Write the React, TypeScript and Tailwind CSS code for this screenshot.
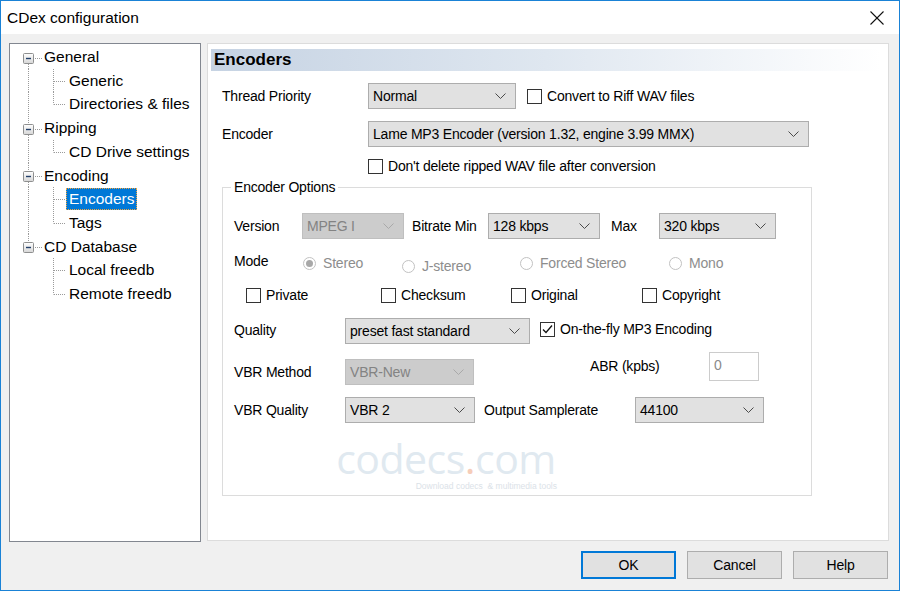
import React from 'react';

const F = "font-['Liberation_Sans',Arial,sans-serif]";

type Node = { label: string; root: boolean; first?: boolean; lastRoot?: boolean; lastChild?: boolean; rootGoesOn?: boolean; selected?: boolean };

const tree: Node[] = [
  { label: 'General', root: true, first: true },
  { label: 'Generic', root: false, rootGoesOn: true },
  { label: 'Directories & files', root: false, rootGoesOn: true, lastChild: true },
  { label: 'Ripping', root: true },
  { label: 'CD Drive settings', root: false, rootGoesOn: true, lastChild: true },
  { label: 'Encoding', root: true },
  { label: 'Encoders', root: false, rootGoesOn: true, selected: true },
  { label: 'Tags', root: false, rootGoesOn: true, lastChild: true },
  { label: 'CD Database', root: true, lastRoot: true },
  { label: 'Local freedb', root: false },
  { label: 'Remote freedb', root: false, lastChild: true },
];

const dot = { stroke: '#9a9a9a', strokeWidth: 1, strokeDasharray: '1 1', fill: 'none' };

function Connector({ n }: { n: Node }) {
  if (n.root) {
    return (
      <svg width="32" height="24" viewBox="0 0 32 24" className="shrink-0 overflow-visible">
        <defs>
          <linearGradient id="bx" x1="0" y1="0" x2="0" y2="1">
            <stop offset="0" stopColor="#ffffff" />
            <stop offset="1" stopColor="#d6d6d6" />
          </linearGradient>
        </defs>
        {!n.first && <line x1="18.5" y1="0" x2="18.5" y2="8" {...dot} />}
        {!n.lastRoot && <line x1="18.5" y1="19" x2="18.5" y2="24" {...dot} />}
        <line x1="25" y1="13.5" x2="32" y2="13.5" {...dot} />
        <rect x="13.5" y="8.5" width="10" height="10" rx="1" fill="url(#bx)" stroke="#8e8f8f" />
        <line x1="16" y1="13.5" x2="21" y2="13.5" stroke="#23406a" strokeWidth="1.4" />
      </svg>
    );
  }
  return (
    <svg width="56" height="24" viewBox="0 0 56 24" className="shrink-0 overflow-visible">
      {n.rootGoesOn && <line x1="18.5" y1="0" x2="18.5" y2="24" {...dot} />}
      <line x1="43.5" y1="0" x2="43.5" y2={n.lastChild ? 12.5 : 24} {...dot} />
      <line x1="44" y1="12.5" x2="56" y2="12.5" {...dot} />
    </svg>
  );
}

function Chevron({ disabled }: { disabled?: boolean }) {
  return (
    <svg width="11" height="6" viewBox="0 0 11 6" className="shrink-0">
      <polyline points="0.5,0.5 5.5,5.5 10.5,0.5" fill="none" stroke={disabled ? '#a9a9a9' : '#4a4a4a'} strokeWidth="1" />
    </svg>
  );
}

function Select({ value, className, disabled }: { value: string; className: string; disabled?: boolean }) {
  return (
    <div
      className={`h-[26px] shrink-0 flex items-center justify-between pl-[4px] pr-[9px] border ${
        disabled ? 'bg-[#cccccc] border-[#bfbfbf] text-[#838383]' : 'bg-[#e1e1e1] border-[#adadad] text-black'
      } ${className}`}
    >
      <span className="whitespace-nowrap">{value}</span>
      <Chevron disabled={disabled} />
    </div>
  );
}

function Check({ checked }: { checked?: boolean }) {
  return (
    <div className="w-[15px] h-[15px] shrink-0 border border-[#333333] bg-white flex items-center justify-center">
      {checked && (
        <svg width="13" height="13" viewBox="0 0 13 13">
          <polyline points="2,6.5 5,9.5 11,2.5" fill="none" stroke="#111" strokeWidth="1.3" />
        </svg>
      )}
    </div>
  );
}

function CheckLabel({ label, checked }: { label: string; checked?: boolean }) {
  return (
    <div className="flex items-center gap-[5px] whitespace-nowrap">
      <Check checked={checked} />
      <span>{label}</span>
    </div>
  );
}

function Radio({ label, checked, className }: { label: string; checked?: boolean; className: string }) {
  return (
    <div className={`flex items-center gap-[7px] text-[#8d8d8d] whitespace-nowrap ${className}`}>
      <div className="w-[13px] h-[13px] rounded-full border border-[#c2c2c2] bg-white flex items-center justify-center shrink-0">
        {checked && <div className="w-[7px] h-[7px] rounded-full bg-[#a8a8a8]" />}
      </div>
      <span>{label}</span>
    </div>
  );
}

function Button({ label, focused }: { label: string; focused?: boolean }) {
  return (
    <div
      className={`w-[95px] h-[28px] flex items-center justify-center bg-[#e1e1e1] ${
        focused ? 'border-2 border-[#0078d7]' : 'border border-[#adadad]'
      }`}
    >
      {label}
    </div>
  );
}

export default function App() {
  return (
    <div className={`${F} w-[900px] h-[591px] border border-[#1a82d6] bg-[#f0f0f0] flex flex-col text-[14px] tracking-[-0.2px] text-black overflow-hidden`}>
      {/* title bar */}
      <div className="h-[33px] shrink-0 bg-white flex items-center justify-between pl-[6px] pr-[15px]">
        <span className="text-[15.5px] tracking-normal">CDex configuration</span>
        <svg width="14" height="14" viewBox="0 0 14 14">
          <line x1="0.5" y1="0.5" x2="13.5" y2="13.5" stroke="#111" strokeWidth="1.1" />
          <line x1="13.5" y1="0.5" x2="0.5" y2="13.5" stroke="#111" strokeWidth="1.1" />
        </svg>
      </div>

      <div className="flex gap-[6px] pl-[8px] pt-[9px]">
        {/* tree */}
        <div className="w-[192px] h-[499px] shrink-0 bg-white border border-[#828790] pt-[1px] text-[15.5px] tracking-normal">
          {tree.map((n, i) => (
            <div key={i} className="h-[23.7px] flex items-center">
              <Connector n={n} />
              {n.root ? (
                <span className="ml-[2px] whitespace-nowrap">{n.label}</span>
              ) : (
                <span
                  className={`px-[2px] leading-[20px] whitespace-nowrap border border-dotted ${
                    n.selected ? 'bg-[#0078d7] text-white border-[#f5a53c]' : 'border-transparent'
                  }`}
                >
                  {n.label}
                </span>
              )}
            </div>
          ))}
        </div>

        {/* right page */}
        <div className="w-[682px] h-[498px] shrink-0 bg-white border border-[#dcdcdc] flex flex-col">
          <div className="mt-[5px] ml-[3px] mr-[7px] h-[22px] bg-linear-to-r from-[#c6d3e3] via-[#dfe7f0] to-white flex items-center pl-[3px]">
            <span className="text-[17px] font-bold tracking-normal">Encoders</span>
          </div>

          <div className="pl-[14px] flex flex-col">
            <div className="mt-[12px] h-[26px] flex items-center">
              <span className="w-[146px] shrink-0">Thread Priority</span>
              <Select value="Normal" className="w-[148px]" />
              <div className="ml-[11px]">
                <CheckLabel label="Convert to Riff WAV files" />
              </div>
            </div>

            <div className="mt-[12px] h-[26px] flex items-center">
              <span className="w-[146px] shrink-0">Encoder</span>
              <Select value="Lame MP3 Encoder (version 1.32, engine 3.99 MMX)" className="w-[441px]" />
            </div>

            <div className="mt-[10px] h-[18px] flex items-center pl-[146px]">
              <CheckLabel label="Don't delete ripped WAV file after conversion" />
            </div>

            <fieldset className="mt-[3px] w-[590px] h-[318px] border border-[#dcdcdc]">
              <legend className="ml-[8px] px-[3px] leading-[18px]">Encoder Options</legend>

              <div className="pl-[11px] flex flex-col">
                <div className="mt-[17px] h-[26px] flex items-center">
                  <span className="w-[68px] shrink-0">Version</span>
                  <Select value="MPEG I" disabled className="w-[102px]" />
                  <span className="w-[76px] shrink-0 ml-[8px]">Bitrate Min</span>
                  <Select value="128 kbps" className="w-[112px]" />
                  <span className="w-[48px] shrink-0 ml-[11px]">Max</span>
                  <Select value="320 kbps" className="w-[117px]" />
                </div>

                <div className="mt-[14px] h-[20px] flex items-center">
                  <span className="w-[69px] shrink-0 -mt-[3px]">Mode</span>
                  <Radio label="Stereo" checked className="w-[99px]" />
                  <Radio label="J-stereo" className="w-[118px] mt-[6px]" />
                  <Radio label="Forced Stereo" className="w-[149px]" />
                  <Radio label="Mono" className="" />
                </div>

                <div className="mt-[12px] h-[20px] flex items-center pl-[12px]">
                  <div className="w-[135px] shrink-0"><CheckLabel label="Private" /></div>
                  <div className="w-[130px] shrink-0"><CheckLabel label="Checksum" /></div>
                  <div className="w-[131px] shrink-0"><CheckLabel label="Original" /></div>
                  <CheckLabel label="Copyright" />
                </div>

                <div className="mt-[13px] h-[26px] flex items-center">
                  <span className="w-[111px] shrink-0 -mt-[2px]">Quality</span>
                  <Select value="preset fast standard" className="w-[185px]" />
                  <div className="ml-[10px] -mt-[3px]">
                    <CheckLabel label="On-the-fly MP3 Encoding" checked />
                  </div>
                </div>

                <div className="mt-[8px] h-[33px] flex items-start">
                  <span className="w-[111px] shrink-0 mt-[7px] h-[26px] flex items-center">VBR Method</span>
                  <div className="mt-[7px]">
                    <Select value="VBR-New" disabled className="w-[129px]" />
                  </div>
                  <span className="ml-[116px] w-[119px] shrink-0 h-[29px] flex items-center">ABR (kpbs)</span>
                  <div className="w-[50px] h-[29px] border border-[#cccccc] bg-white text-[#8a8a8a] pl-[4px] pt-[2px]">0</div>
                </div>

                <div className="mt-[12px] h-[26px] flex items-center">
                  <span className="w-[111px] shrink-0">VBR Quality</span>
                  <Select value="VBR 2" className="w-[130px]" />
                  <span className="ml-[9px] w-[151px] shrink-0">Output Samplerate</span>
                  <Select value="44100" className="w-[129px]" />
                </div>

                <div className="mt-[12px] ml-[97px] w-[230px] flex flex-col items-center tracking-normal">
                  <span className="text-[41px] leading-[46px] text-[#e0e9f0] font-['Open_Sans',sans-serif] tracking-[-0.5px]">
                    codecs<span className="text-[#f6cdb9]">.</span>com
                  </span>
                  <span className="self-end mr-[4px] text-[8.5px] leading-[10px] text-[#dbe2e8] whitespace-nowrap">
                    Download codecs &nbsp;&amp; multimedia tools
                  </span>
                </div>
              </div>
            </fieldset>
          </div>
        </div>
      </div>

      {/* buttons */}
      <div className="mt-[9px] flex justify-end gap-[11px] pr-[11px]">
        <Button label="OK" focused />
        <Button label="Cancel" />
        <Button label="Help" />
      </div>
    </div>
  );
}
